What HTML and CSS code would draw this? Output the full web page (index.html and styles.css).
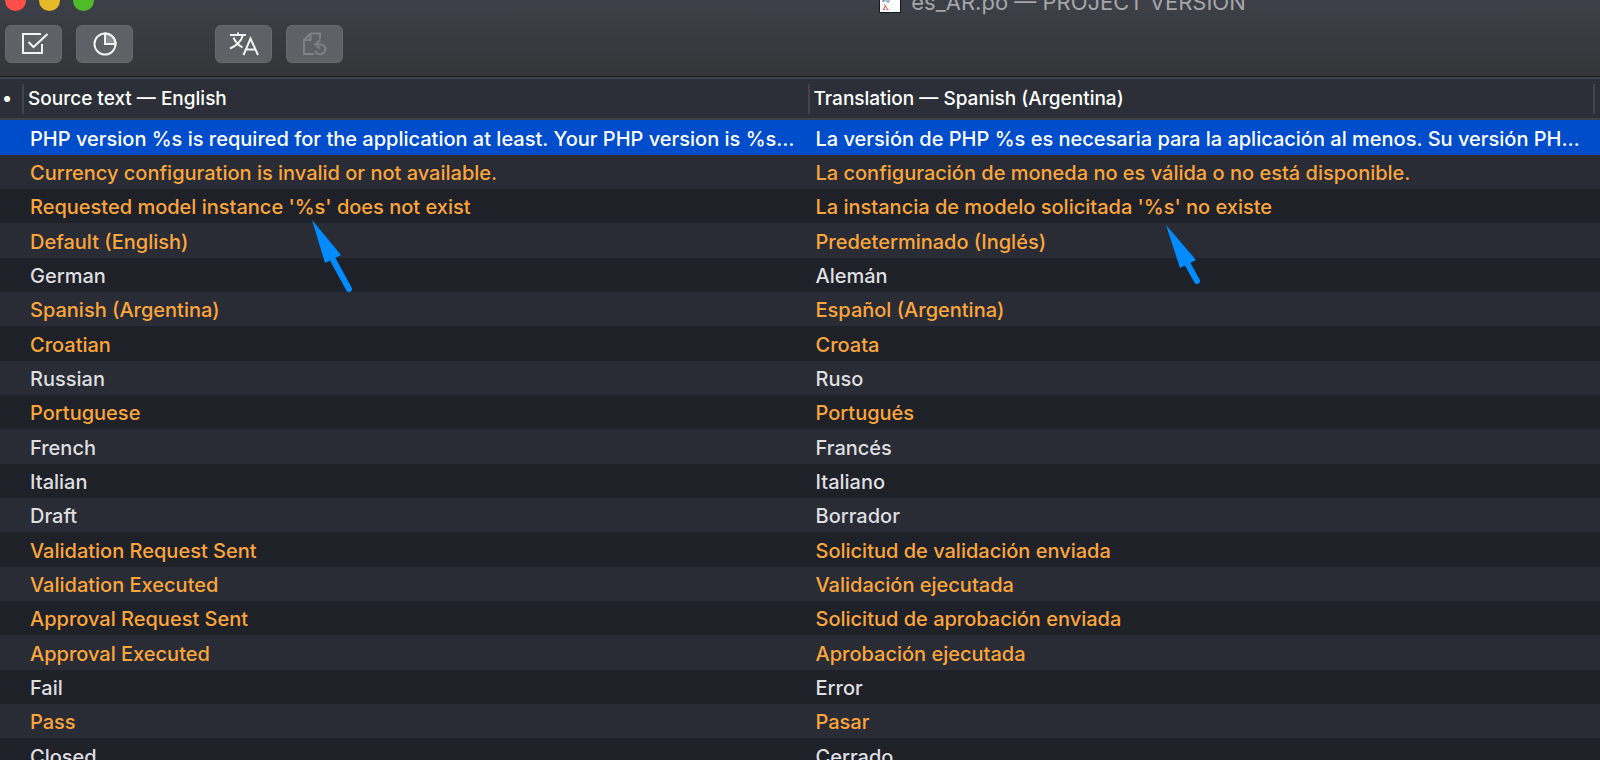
FILE: index.html
```html
<!DOCTYPE html>
<html lang="en">

<head>
  <meta charset="UTF-8">
  <meta name="viewport" content="width=device-width, initial-scale=1">
  <title>es_AR.po — PROJECT VERSION</title>
  <link rel="stylesheet" href="styles.css">
</head>

<body>
  <header class="window-top">
    <div class="titlebar">
      <div class="lights">
        <button class="light light-close" aria-label="Close"></button>
        <button class="light light-minimize" aria-label="Minimize"></button>
        <button class="light light-zoom" aria-label="Zoom"></button>
      </div>
      <h1 class="title">
        <svg class="doc-icon" viewBox="0 0 22 26" aria-hidden="true">
          <rect x="1" y="1" width="20" height="24" fill="#fff"/>
          <path d="M0.5 0v25.500h21V0" fill="none" stroke="#17181b"/>
          <path d="M4 12v3M4 12h2v2H4M8 12h2v3H8z" fill="none" stroke="#5d84ad"/>
          <path d="M5 17.500l1.500 1M6.500 18.500l-2 4M6.500 19l2 3.500M4 22.500h2M7.500 22.500h2" fill="none" stroke="#e0504f"/>
        </svg>
        <span>es_AR.po — PROJECT VERSION</span>
      </h1>
    </div>

    <div class="toolbar">
      <button class="tool" aria-label="Validate">
        <svg width="28" height="24" viewBox="-1 0 28 24">
          <path d="M20 2H2v19h19v-9M7.500 10l5 5L26.500 2"/>
        </svg>
      </button>
      <button class="tool" aria-label="Statistics">
        <svg width="28" height="24" viewBox="0 0 28 24">
          <circle cx="14" cy="12" r="10.500"/>
          <path d="M14 1.500V12h10.500A10.500 10.500 0 0 0 14 1.500z" fill="#8b8d92"/>
        </svg>
      </button>
      <button class="tool tool-translate" aria-label="Pre-translate">
        <svg width="30" height="24" viewBox="0 0 30 24">
          <path d="M1 3h16M9 .5V3M14 3C12 10 7 14 1 16.500M4.500 5.500C6 9 9 13 13.500 15.500M14.500 23l7-16.500L29 23M17 17.500h9.500"/>
        </svg>
      </button>
      <button class="tool" aria-label="Update from POT" disabled>
        <svg width="28" height="24" viewBox="0 0 28 24">
          <path d="M19 7V1.500H9.500L3 8v14h10M9.500 1.500V8H3M19 8l-4.500 4.500 4.500 4M15 12.500c6-1 9.500 1 9.500 4.500a5.500 5.500 0 0 1-10.500 2"/>
        </svg>
      </button>
    </div>
  </header>

  <main class="catalog">
    <table class="strings">
      <colgroup>
        <col class="col-mark">
        <col>
        <col>
        <col class="col-end">
      </colgroup>
      <thead>
        <tr>
          <th><div class="head head-mark">•</div></th>
          <th><div class="head">Source text — English</div></th>
          <th><div class="head">Translation — Spanish (Argentina)</div></th>
          <th></th>
        </tr>
      </thead>
      <tbody>
        <tr class="selected"><td></td><td>PHP version %s is required for the application at least. Your PHP version is %s…</td><td>La versión de PHP %s es necesaria para la aplicación al menos. Su versión PH…</td><td></td></tr>
        <tr class="fuzzy"><td></td><td>Currency configuration is invalid or not available.</td><td>La configuración de moneda no es válida o no está disponible.</td><td></td></tr>
        <tr class="fuzzy"><td></td><td>Requested model instance '%s' does not exist</td><td>La instancia de modelo solicitada '%s' no existe</td><td></td></tr>
        <tr class="fuzzy"><td></td><td>Default (English)</td><td>Predeterminado (Inglés)</td><td></td></tr>
        <tr><td></td><td>German</td><td>Alemán</td><td></td></tr>
        <tr class="fuzzy"><td></td><td>Spanish (Argentina)</td><td>Español (Argentina)</td><td></td></tr>
        <tr class="fuzzy"><td></td><td>Croatian</td><td>Croata</td><td></td></tr>
        <tr><td></td><td>Russian</td><td>Ruso</td><td></td></tr>
        <tr class="fuzzy"><td></td><td>Portuguese</td><td>Portugués</td><td></td></tr>
        <tr><td></td><td>French</td><td>Francés</td><td></td></tr>
        <tr><td></td><td>Italian</td><td>Italiano</td><td></td></tr>
        <tr><td></td><td>Draft</td><td>Borrador</td><td></td></tr>
        <tr class="fuzzy"><td></td><td>Validation Request Sent</td><td>Solicitud de validación enviada</td><td></td></tr>
        <tr class="fuzzy"><td></td><td>Validation Executed</td><td>Validación ejecutada</td><td></td></tr>
        <tr class="fuzzy"><td></td><td>Approval Request Sent</td><td>Solicitud de aprobación enviada</td><td></td></tr>
        <tr class="fuzzy"><td></td><td>Approval Executed</td><td>Aprobación ejecutada</td><td></td></tr>
        <tr><td></td><td>Fail</td><td>Error</td><td></td></tr>
        <tr class="fuzzy"><td></td><td>Pass</td><td>Pasar</td><td></td></tr>
        <tr><td></td><td>Closed</td><td>Cerrado</td><td></td></tr>
      </tbody>
    </table>

    <!-- arrows pointing at the %s placeholders -->
    <svg class="arrow arrow-source" width="44" height="76" viewBox="0 0 44 76" aria-hidden="true">
      <path d="M2 2l29 35-6 3-10 5z"/>
      <path class="shaft" d="M22 40l17 31"/>
    </svg>
    <svg class="arrow arrow-translation" width="44" height="64" viewBox="0 0 44 64" aria-hidden="true">
      <path d="M2 2l30 35-6 3-10 5z"/>
      <path class="shaft" d="M23 40l10 18"/>
    </svg>
  </main>
</body>

</html>
```

FILE: styles.css
```css
* {
  box-sizing: border-box;
}

body {
  margin: 0;
  height: 100vh;
  overflow: hidden;
  background-color: #1f2129;
  color: #dfdfe0;
  font-family: Inter, "Liberation Sans", sans-serif;
}

/* title bar and toolbar */
.window-top {
  background: linear-gradient(#3e4049, #343538);
  border-bottom: 1px solid #17181a;
}

.titlebar {
  display: flex;
  align-items: flex-end;
  height: 13px;
}

.lights {
  display: flex;
  gap: 13px;
  padding: 0 5px 2px;
}

.light {
  width: 21px;
  height: 21px;
  padding: 0;
  border: none;
  border-radius: 50%;
}

.light-close {
  background-color: #ff4f4a;
}

.light-minimize {
  background-color: #e5b927;
}

.light-zoom {
  background-color: #4fbb28;
}

.title {
  display: flex;
  flex: 1;
  align-items: flex-end;
  justify-content: center;
  gap: 10px;
  margin: 0 0 0 426px;
  color: #a5a6aa;
  font-size: 22px;
  font-weight: 400;
  line-height: 22px;
}

.doc-icon {
  width: 22px;
  height: 26px;
}

.toolbar {
  display: flex;
  gap: 14px;
  padding: 12px 5px 13px;
}

.tool {
  display: flex;
  align-items: center;
  justify-content: center;
  width: 57px;
  height: 38px;
  padding: 0;
  background: linear-gradient(#5f6168, #606165);
  border: 1px solid #68696f;
  border-radius: 6px;
}

.tool-translate {
  margin-left: 68px;
}

.tool svg {
  fill: none;
  stroke: #f2f2f3;
  stroke-width: 2;
}

.tool:disabled svg {
  stroke: #808186;
}

/* list of strings */
.catalog {
  position: relative;
}

.strings {
  width: 100%;
  table-layout: fixed;
  border-collapse: separate;
  border-spacing: 0;
}

.col-mark {
  width: 24px;
}

.col-end {
  width: 5px;
}

th {
  height: 43px;
  padding: 0;
  background-color: #2c2f38;
  border-top: 2px solid #3e444a;
  border-bottom: 2px solid #404248;
  color: #fff;
  font-size: 19px;
  font-weight: 500;
  text-align: left;
}

.head {
  height: 30px;
  padding-left: 4px;
  border-right: 2px solid #41444c;
  line-height: 30px;
  white-space: nowrap;
}

.head-mark {
  padding-left: 2px;
}

td {
  height: 34px;
  padding: 2px 0 0 6px;
  font-size: 20px;
  font-weight: 500;
  line-height: 32px;
  white-space: nowrap;
}

tbody tr:nth-child(3n + 1) td {
  height: 35px;
}

tbody tr:nth-child(even) {
  background-color: #292c34;
}

.fuzzy {
  color: #fca63c;
}

.selected {
  background-color: #004dcb;
  color: #fff;
}

.arrow {
  position: absolute;
  fill: #008cff;
}

.arrow .shaft {
  stroke: #008cff;
  stroke-width: 6;
  stroke-linecap: round;
}

.arrow-source {
  top: 141px;
  left: 310px;
}

.arrow-translation {
  top: 146px;
  left: 1164px;
}
```
